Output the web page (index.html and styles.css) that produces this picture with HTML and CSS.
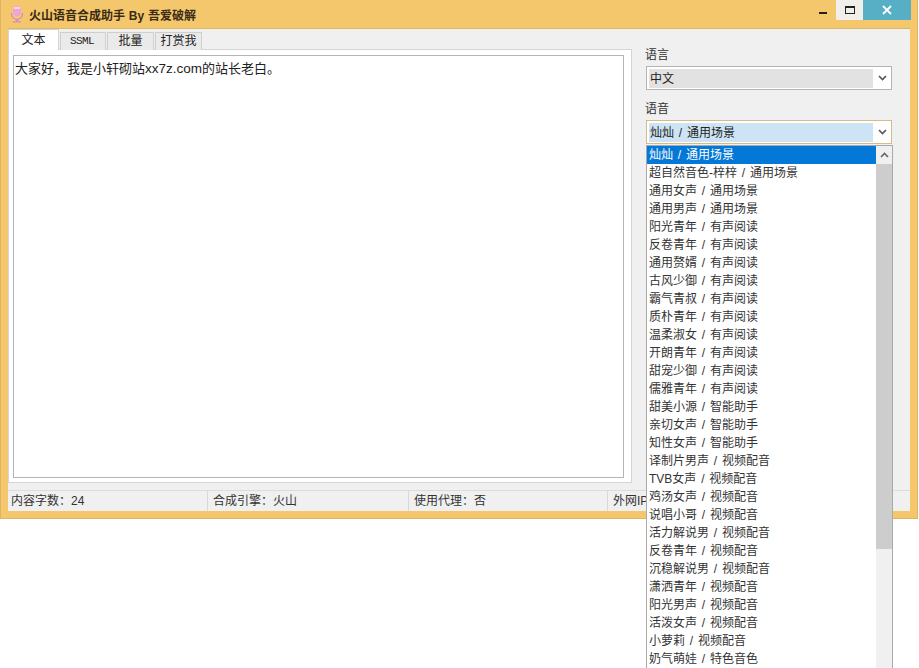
FILE: index.html
```html
<!DOCTYPE html>
<html lang="zh">
<head>
<meta charset="utf-8">
<title>火山语音合成助手 By 吾爱破解</title>
<link rel="stylesheet" href="styles.css">
</head>
<body>
<div class="window">
  <header class="titlebar">
    <svg class="app-icon" width="14" height="18" viewBox="0 0 14 18">
      <rect x="3" y="1" width="8" height="10" rx="4" fill="#e9a6d6"/>
      <rect x="4" y="2" width="6" height="2" fill="#f5d3ec"/>
      <path d="M1.5 8v1a5.500 5.500 0 0 0 11 0V8" fill="none" stroke="#d98cc6" stroke-width="1.300"/>
      <rect x="6" y="14" width="2" height="2" fill="#d98cc6"/>
      <rect x="3" y="16" width="8" height="1.500" fill="#d98cc6"/>
    </svg>
    <span class="title-text">火山语音合成助手 By 吾爱破解</span>
    <div class="win-buttons">
      <div class="win-btn min"><span class="min-glyph"></span></div>
      <div class="win-btn max"><span class="max-glyph"></span></div>
      <div class="win-btn close">
        <svg width="10" height="10" viewBox="0 0 10 10"><path d="M1 1l8 8M9 1l-8 8" stroke="#fff" stroke-width="1.800" fill="none"/></svg>
      </div>
    </div>
  </header>
  <div class="client">
    <div class="main">
      <div class="left">
        <div class="tabs">
          <div class="tab active">文本</div>
          <div class="tab mono">SSML</div>
          <div class="tab wide">批量</div>
          <div class="tab wide">打赏我</div>
        </div>
        <div class="panel">
          <div class="textbox">大家好，我是小轩砌站<span class="latin">xx7z.com</span>的站长老白。</div>
        </div>
      </div>
      <div class="right">
        <div class="label">语言</div>
        <div class="combo">
          <div class="combo-value grey">中文</div>
          <svg class="chev" width="9" height="6" viewBox="0 0 9 6"><path d="M1 1l3.500 3.500L8 1" fill="none" stroke="#555" stroke-width="1.600"/></svg>
        </div>
        <div class="label second">语音</div>
        <div class="combo focus">
          <div class="combo-value blue">灿灿 / 通用场景</div>
          <svg class="chev" width="9" height="6" viewBox="0 0 9 6"><path d="M1 1l3.500 3.500L8 1" fill="none" stroke="#555" stroke-width="1.600"/></svg>
        </div>
      </div>
    </div>
    <footer class="status">
      <div class="cell c1">内容字数：24</div>
      <div class="cell c2">合成引擎：火山</div>
      <div class="cell c3">使用代理：否</div>
      <div class="cell c4">外网IP</div>
    </footer>
  </div>
</div>
<div class="dropdown">
  <ul class="list">
    <li class="sel">灿灿 / 通用场景</li>
    <li>超自然音色-梓梓 / 通用场景</li>
    <li>通用女声 / 通用场景</li>
    <li>通用男声 / 通用场景</li>
    <li>阳光青年 / 有声阅读</li>
    <li>反卷青年 / 有声阅读</li>
    <li>通用赘婿 / 有声阅读</li>
    <li>古风少御 / 有声阅读</li>
    <li>霸气青叔 / 有声阅读</li>
    <li>质朴青年 / 有声阅读</li>
    <li>温柔淑女 / 有声阅读</li>
    <li>开朗青年 / 有声阅读</li>
    <li>甜宠少御 / 有声阅读</li>
    <li>儒雅青年 / 有声阅读</li>
    <li>甜美小源 / 智能助手</li>
    <li>亲切女声 / 智能助手</li>
    <li>知性女声 / 智能助手</li>
    <li>译制片男声 / 视频配音</li>
    <li>TVB女声 / 视频配音</li>
    <li>鸡汤女声 / 视频配音</li>
    <li>说唱小哥 / 视频配音</li>
    <li>活力解说男 / 视频配音</li>
    <li>反卷青年 / 视频配音</li>
    <li>沉稳解说男 / 视频配音</li>
    <li>潇洒青年 / 视频配音</li>
    <li>阳光男声 / 视频配音</li>
    <li>活泼女声 / 视频配音</li>
    <li>小萝莉 / 视频配音</li>
    <li>奶气萌娃 / 特色音色</li>
  </ul>
  <div class="scrollbar">
    <div class="arrow"><svg width="9" height="6" viewBox="0 0 9 6"><path d="M1 5l3.500-3.500L8 5" fill="none" stroke="#666" stroke-width="1.600"/></svg></div>
    <div class="thumb"></div>
  </div>
</div>
</body>
</html>
```
FILE: styles.css
```css
* { box-sizing: border-box; }
html, body { margin: 0; padding: 0; }
body {
  width: 919px;
  height: 668px;
  overflow: hidden;
  position: relative;
  background: #fff;
  font-family: "Liberation Sans", "Noto Sans CJK SC", sans-serif;
  font-size: 12px;
  color: #222;
}
.window {
  width: 918px;
  height: 519px;
  background: #f4c76c;
  border: 1px solid #dcb565;
  border-top: 0;
  padding: 0 7px 7px 7px;
  display: flex;
  flex-direction: column;
}
.titlebar {
  height: 28px;
  display: flex;
  align-items: center;
  flex: none;
  margin-left: -7px;
  margin-right: -7px;
  padding-left: 9px;
}
.app-icon { flex: none; }
.title-text {
  margin-left: 5px;
  font-size: 12px;
  font-weight: bold;
  word-spacing: 0.5px;
  color: #3a2c14;
}
.win-buttons {
  margin-left: auto;
  display: flex;
  align-items: flex-start;
  align-self: flex-start;
  margin-right: 6px;
}
.win-btn {
  height: 20px;
  display: flex;
  align-items: center;
  justify-content: center;
}
.win-btn.min { width: 26px; }
.min-glyph { width: 8px; height: 2px; background: #222; margin-top: 5px; }
.win-btn.max { width: 27px; background: #f0efe9; }
.max-glyph { width: 10px; height: 8px; border: 1px solid #222; border-top-width: 2px; }
.win-btn.close { width: 48px; background: #56afc4; }
.client {
  flex: 1;
  background: #f0f0f0;
  border-top: 1px solid #dcb565;
  display: flex;
  flex-direction: column;
  min-height: 0;
}
.main { flex: 1; display: flex; min-height: 0; }
.left { width: 624px; padding-top: 1px; flex: none; }
.tabs { display: flex; gap: 1px; height: 20px; }
.tab {
  width: 46px;
  height: 18px;
  margin-top: 2px;
  background: #eaeaea;
  border: 1px solid #cfcfcf;
  border-bottom: 0;
  font-size: 12px;
  line-height: 16px;
  text-align: center;
}
.tab.wide { width: 47px; }
.tab.active {
  width: 51px;
  height: 21px;
  margin-top: -1px;
  background: #fff;
  border-color: #d5d5d5;
  line-height: 21px;
  position: relative;
  z-index: 1;
}
.tab.mono {
  font-family: "Liberation Mono", monospace;
  font-size: 11px;
  letter-spacing: -0.6px;
  padding-right: 2px;
}
.panel {
  height: 434px;
  background: #fff;
  border: 1px solid #d5d5d5;
  padding: 5px 7px 4px 4px;
  margin-top: -1px;
}
.textbox {
  height: 100%;
  background: #fff;
  border: 1px solid #b5b5b5;
  padding: 5px 1px;
  font-size: 13px;
  line-height: 16px;
}
.latin { font-size: 13.5px; }
.right { flex: 1; padding: 18px 17px 0 13px; }
.label { height: 16px; line-height: 16px; color: #333; }
.label.second { margin-top: 11px; }
.combo {
  margin: 3px 0 0 1px;
  width: 246px;
  height: 24px;
  background: #fff;
  border: 1px solid #b4b4b4;
  padding: 2px;
  display: flex;
  align-items: center;
}
.combo.focus { border-color: #d6bb85; }
.combo-value {
  width: 224px;
  height: 19px;
  line-height: 20px;
  padding-left: 1px;
  word-spacing: 1.5px;
}
.combo-value.grey { background: #e2e2e2; }
.combo-value.blue { background: #cde4f5; }
.chev { margin-left: 5px; }
.status {
  height: 21px;
  flex: none;
  display: flex;
  border-top: 1px solid #dcdcdc;
  line-height: 20px;
}
.cell { border-right: 1px solid #d8d8d8; padding-left: 3px; color: #333; }
.c1 { width: 200px; }
.c2 { width: 201px; padding-left: 5px; }
.c3 { width: 199px; padding-left: 5px; }
.c4 { flex: 1; border-right: 0; padding-left: 5px; }
.dropdown {
  position: absolute;
  left: 646px;
  top: 145px;
  width: 247px;
  height: 540px;
  background: #fff;
  border: 1px solid #a9a9a9;
  display: flex;
}
.list { list-style: none; margin: 0; padding: 0; width: 229px; flex: none; }
.list li {
  height: 18px;
  line-height: 18px;
  padding-left: 2px;
  white-space: nowrap;
  word-spacing: 1.5px;
  color: #333;
}
.list li.sel { background: #0478d7; color: #fff; }
.scrollbar { flex: 1; background: #f0f0f0; }
.arrow { height: 18px; display: flex; align-items: center; justify-content: center; }
.thumb { height: 385px; background: #cdcdcd; }
```
